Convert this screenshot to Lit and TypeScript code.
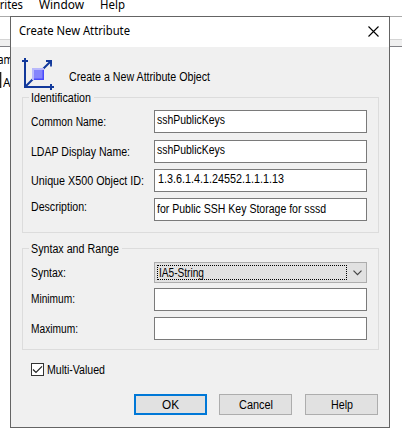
import { LitElement, html, css, svg } from "lit";
import { customElement, property, state } from "lit/decorators.js";
import { styleMap } from "lit/directives/style-map.js";

/** A single line of text condensed or widened to an exact advance width. */
@customElement("fit-text")
class FitText extends LitElement {
  @property() text = "";
  @property({ type: Number }) w = 50;
  @state() private ratio = 1;

  static styles = css`
    :host { display: block; white-space: pre; height: 14px; line-height: 14px; }
    .t { display: inline-block; transform-origin: 0 0; }
  `;

  firstUpdated() {
    const el = this.renderRoot.querySelector(".t") as HTMLElement;
    const natural = el.getBoundingClientRect().width;
    if (natural) this.ratio = this.w / natural;
  }

  render() {
    return html`<span class="t" style=${styleMap({ transform: `scaleX(${this.ratio})` })}>${this.text}</span>`;
  }
}

const t = (text: string, w: number) =>
  html`<fit-text .text=${text} .w=${w} style=${styleMap({ width: `${w}px` })}></fit-text>`;

const attributeIcon = svg`
  <g fill="none" stroke="#12399b" stroke-width="2">
    <path d="M5 1V30H34M2 4H8M31 27V33M5 30L31 4"/>
    <path d="M26 4H31V9.500" stroke-width="1.800"/>
  </g>
  <path d="M27 3H32V8Z" fill="#12399b"/>
  <rect x="12" y="11" width="12" height="12" fill="#4a4afb"/>
  <path d="M12 11H24V13H14V23H12Z" fill="#b9b9fb"/>
  <rect x="14" y="13" width="8.500" height="8.500" fill="#8484fc"/>`;

@customElement("app-root")
class AppRoot extends LitElement {
  static styles = css`
    :host {
      display: block; position: relative; width: 402px; height: 445px;
      overflow: hidden; background: #fff; color: #000;
      font: 12px "Liberation Sans", Arial, sans-serif;
    }
    * { box-sizing: border-box; }
    .ui { font-family: "Noto Sans", "Open Sans", sans-serif; }
    .menu { display: flex; height: 16px; margin-left: -25px; gap: 16px; align-items: flex-start; }
    .menu fit-text { margin-top: -2px; flex: none; }
    .toolbar { height: 23px; border-top: 1px solid #aaa; }
    .splitter { height: 8px; background: #f0f0f0; border-top: 1px solid #d5d5d5; border-bottom: 1px solid #828287; }
    .list { display: flex; flex-direction: column; padding-top: 6px; }
    .head { margin-left: -10px; }
    .item { display: flex; margin-top: 5px; height: 17px; }
    .bar { width: 2px; height: 16px; border-left: 1px solid #222; background: #bbb; margin-right: 1px; }
    .item fit-text { margin-top: 4px; }

    .dialog {
      position: absolute; left: 10px; top: 16px; width: 380px; height: 412px;
      border: 1px solid #646464; background: #f0f0f0;
      display: flex; flex-direction: column;
    }
    .title { height: 30px; background: #fff; display: flex; justify-content: space-between; padding: 7px 10px 0 8px; }
    .close { width: 11px; height: 11px; margin-top: 2px; }
    .intro { display: flex; height: 50px; padding: 10px 0 0 9px; }
    .intro svg { width: 35px; height: 35px; flex: none; }
    .intro fit-text { margin: 13px 0 0 14px; }
    .group { width: 357px; margin-left: 11px; border: 1px solid #dcdcdc; }
    .ident { height: 136px; }
    .range { height: 102px; margin-top: 15px; }
    .legend { display: block; width: max-content; height: 14px; margin: -7px 0 0 6px; padding: 0 3px 0 2px; background: #f0f0f0; }
    .row { display: grid; grid-template-columns: 123px 213px; padding-left: 8px; height: 23px; }
    .ident .row { margin-bottom: 6px; }
    .ident .row.first { margin: 5px 0 7px; }
    .range .row { margin-bottom: 6px; }
    .range .row.first { margin: 6px 0 5px; height: 21px; }
    .l4 { padding-top: 4px; }
    .l5 { padding-top: 5px; }
    .l2 { padding-top: 2px; }
    .field { border: 1px solid #7a7a7a; background: #fff; height: 23px; padding: 2px 0 0 1.5px; }
    .oid { padding: 2px 0 0 2.5px; }
    .desc { padding-top: 3px; }
    .select { display: flex; justify-content: space-between; height: 21px; border: 1px solid #adadad; background: #e1e1e1; padding: 2px 4px 2px 2px; }
    .focus { width: 190px; height: 15px; border: 1px dotted #000; }
    .focus fit-text { margin-left: 0.5px; }
    .chev { width: 9px; height: 6px; margin-top: 5px; }
    .check { display: flex; height: 13px; margin: 13px 0 0 20px; }
    .box { width: 13px; height: 13px; border: 1px solid #333; background: #fff; display: block; }
    .box svg { display: block; width: 11px; height: 11px; }
    .check fit-text { margin-left: 3px; }
    .buttons { display: flex; margin: 18px 0 0 123px; gap: 13px; }
    .btn { width: 73px; height: 21px; border: 1px solid #adadad; background: #e1e1e1; display: flex; justify-content: center; padding-top: 3px; }
    .default { border: 2px solid #0078d7; padding-top: 2px; margin-right: -1px; }
  `;

  private field(label: string, lw: number, value: string, vw: number, pad: string, kind = "", first = "") {
    return html`<div class="row ${first}">
      <div class=${pad}>${t(label, lw)}</div>
      <div class="field ${kind}">${value ? t(value, vw) : ""}</div>
    </div>`;
  }

  render() {
    return html`
      <div class="menu ui">${t("Favorites", 48)}${t("Window", 45)}${t("Help", 25)}</div>
      <div class="toolbar"></div>
      <div class="splitter"></div>
      <div class="list ui">
        <div class="head">${t("Name", 29)}</div>
        <div class="item"><span class="bar"></span>${t("Attributes", 55)}</div>
      </div>

      <div class="dialog">
        <div class="title ui">
          ${t("Create New Attribute", 111)}
          <svg class="close" viewBox="0 0 11 11"><path d="M.5 .5L10.500 10.500M10.500 .5L.5 10.500" stroke="#000" stroke-width="1.100"/></svg>
        </div>
        <div class="intro">
          <svg viewBox="0 0 35 35">${attributeIcon}</svg>
          ${t("Create a New Attribute Object", 141)}
        </div>
        <section class="group ident">
          <div class="legend">${t("Identification", 60)}</div>
          ${this.field("Common Name:", 75, "sshPublicKeys", 68, "l5", "", "first")}
          ${this.field("LDAP Display Name:", 99, "sshPublicKeys", 68, "l5")}
          ${this.field("Unique X500 Object ID:", 113, "1.3.6.1.4.1.24552.1.1.1.13", 126, "l5", "oid")}
          ${this.field("Description:", 56, "for Public SSH Key Storage for sssd", 169, "l2", "desc")}
        </section>
        <section class="group range">
          <div class="legend">${t("Syntax and Range", 88)}</div>
          <div class="row first">
            <div class="l4">${t("Syntax:", 35)}</div>
            <div class="select">
              <div class="focus">${t("IA5-String", 45)}</div>
              <svg class="chev" viewBox="0 0 9 6"><path d="M.5 .7L4.500 4.700L8.500 .7" fill="none" stroke="#444" stroke-width="1.200"/></svg>
            </div>
          </div>
          ${this.field("Minimum:", 44, "", 0, "l4")}
          ${this.field("Maximum:", 47, "", 0, "l5")}
        </section>
        <div class="check">
          <span class="box"><svg viewBox="0 0 11 11"><path d="M1 5.500L4 8.500L10 2.300" fill="none" stroke="#222" stroke-width="1.200"/></svg></span>
          ${t("Multi-Valued", 58)}
        </div>
        <div class="buttons">
          <div class="btn default">${t("OK", 17)}</div>
          <div class="btn">${t("Cancel", 34)}</div>
          <div class="btn">${t("Help", 22)}</div>
        </div>
      </div>`;
  }
}
